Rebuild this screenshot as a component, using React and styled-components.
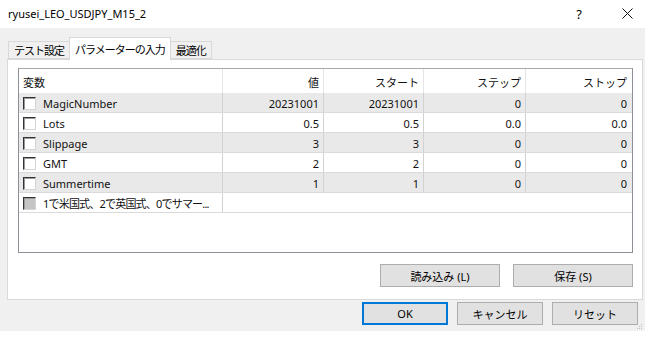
import React from 'react';
import styled, { createGlobalStyle } from 'styled-components';

const Global = createGlobalStyle`
  body {
    margin: 0;
    background: #fff;
    font-family: "Noto Sans", "Noto Sans CJK JP", sans-serif;
    font-size: 11px;
    color: #000;
  }
`

const Window = styled.div`
  position: relative;
  width: 645px;
  height: 331px;
  display: flex;
  flex-direction: column;
  background: #f0f0f0;
`

const TitleBar = styled.div`
  height: 28px;
  background: #fff;
  display: flex;
  align-items: center;
  padding-left: 8px;
  padding-bottom: 1px;
  box-sizing: border-box;
`

const Title = styled.div`
  flex: 1;
  font-size: 11px;
  color: #000;
`

const Help = styled.div`
  width: 24px;
  text-align: center;
  font-size: 13px;
  margin-right: 24px;
`

const Close = styled.div`
  width: 24px;
  display: flex;
  justify-content: center;
  margin-right: 6px;
`

const Body = styled.div`
  flex: 1;
  display: flex;
  flex-direction: column;
  padding: 9px 0 0 7px;
`

const TabStrip = styled.div`
  display: flex;
  align-items: flex-end;
  height: 22px;
  padding-left: 1px;
  position: relative;
  z-index: 1;
`

const Tab = styled.div`
  height: ${p => (p.$active ? '23px' : '18px')};
  box-sizing: border-box;
  padding: 0 ${p => (p.$active ? '5px' : '5px')};
  display: flex;
  align-items: center;
  background: ${p => (p.$active ? '#fff' : '#f0f0f0')};
  border: 1px solid #d9d9d9;
  border-bottom: ${p => (p.$active ? 'none' : '1px solid #d9d9d9')};
  margin-left: ${p => (p.$active ? '-1px' : '0')};
  margin-right: ${p => (p.$active ? '-1px' : '0')};
  margin-bottom: ${p => (p.$active ? '-1px' : '0')};
  font-size: 11px;
  letter-spacing: -1px;
  white-space: nowrap;
`

const Panel = styled.div`
  width: 636px;
  height: 241px;
  box-sizing: border-box;
  background: #fff;
  border: 1px solid #d9d9d9;
  padding: 8px 9px 0 10px;
  display: flex;
  flex-direction: column;
`

const List = styled.div`
  width: 615px;
  height: 185px;
  box-sizing: border-box;
  border: 1px solid #8c8f96;
  border-top-color: #a8a8a8;
  background: #fff;
`

const Row = styled.div`
  display: grid;
  grid-template-columns: 204px 101px 100px 102px 105px;
  height: ${p => (p.$head ? '24px' : '20px')};
  box-sizing: border-box;
  background: ${p => (p.$shade ? '#e9e9e9' : '#fff')};
  border-bottom: ${p => (p.$head ? 'none' : '1px solid #dadada')};
`

const Cell = styled.div`
  display: flex;
  align-items: center;
  justify-content: ${p => (p.$left ? 'flex-start' : 'flex-end')};
  padding: ${p => (p.$left ? '1px 0 0 4px' : '1px 4px 0 0')};
  border-right: ${p => (p.$line ? `1px solid ${p.$head ? '#e5e5e5' : '#d2d2d2'}` : 'none')};
  white-space: nowrap;
  overflow: hidden;
  color: #111;
  font-size: 11px;
  letter-spacing: ${p => (p.$tight ? '-0.8px' : 'normal')};
  gap: 7px;
`

const Check = styled.span`
  flex: none;
  width: 13px;
  height: 13px;
  box-sizing: border-box;
  border: 1px solid;
  border-color: #333 #d4d4d4 #d4d4d4 #333;
  box-shadow: inset 1px 1px 0 #9a9a9a;
  background: ${p => (p.$disabled ? '#c4c4c4' : '#fff')};
`

const ButtonRow = styled.div`
  display: flex;
  justify-content: flex-end;
  gap: 13px;
  margin-top: 11px;
`

const Button = styled.button`
  width: ${p => p.$w || 120}px;
  height: ${p => p.$h || 23}px;
  box-sizing: border-box;
  background: #e1e1e1;
  border: ${p => (p.$default ? '2px solid #0078d7' : '1px solid #adadad')};
  font-family: "Noto Sans", "Noto Sans CJK JP", sans-serif;
  font-size: 11px;
  color: #000;
  padding: 0;
`

const Footer = styled.div`
  display: flex;
  justify-content: flex-end;
  gap: 9px;
  padding: 2px 7px 0 0;
`

const Grip = styled.svg`
  position: absolute;
  right: 2px;
  bottom: 1px;
`

const rows = [
  ['MagicNumber', '20231001', '20231001', '0', '0'],
  ['Lots', '0.5', '0.5', '0.0', '0.0'],
  ['Slippage', '3', '3', '0', '0'],
  ['GMT', '2', '2', '0', '0'],
  ['Summertime', '1', '1', '0', '0'],
]

export default function App() {
  return (
    <Window>
      <Global />
      <TitleBar>
        <Title>ryusei_LEO_USDJPY_M15_2</Title>
        <Help>?</Help>
        <Close>
          <svg width="11" height="11" viewBox="0 0 11 11">
            <path d="M0.5 0.5 L10.5 10.5 M10.5 0.5 L0.5 10.5" stroke="#111" strokeWidth="1" />
          </svg>
        </Close>
      </TitleBar>
      <Body>
        <TabStrip>
          <Tab>テスト設定</Tab>
          <Tab $active>パラメーターの入力</Tab>
          <Tab>最適化</Tab>
        </TabStrip>
        <Panel>
          <List>
            <Row $head>
              <Cell $left $line $head>変数</Cell>
              <Cell $line $head>値</Cell>
              <Cell $line $head>スタート</Cell>
              <Cell $line $head>ステップ</Cell>
              <Cell $head>ストップ</Cell>
            </Row>
            {rows.map((r, i) => (
              <Row key={r[0]} $shade={i % 2 === 0}>
                <Cell $left $line><Check />{r[0]}</Cell>
                <Cell $line>{r[1]}</Cell>
                <Cell $line>{r[2]}</Cell>
                <Cell $line>{r[3]}</Cell>
                <Cell>{r[4]}</Cell>
              </Row>
            ))}
            <Row>
              <Cell $left $line $tight><Check $disabled />1で米国式、2で英国式、0でサマー...</Cell>
              <Cell />
              <Cell />
              <Cell />
              <Cell />
            </Row>
          </List>
          <ButtonRow>
            <Button>読み込み (L)</Button>
            <Button>保存 (S)</Button>
          </ButtonRow>
        </Panel>
        <Footer>
          <Button $default $w={86} $h={23}>OK</Button>
          <Button $w={86} $h={23}>キャンセル</Button>
          <Button $w={86} $h={23}>リセット</Button>
        </Footer>
      </Body>
      <Grip width="7" height="7" viewBox="0 0 7 7">
        <rect x="5" y="1" width="1" height="1" fill="#bbb" />
        <rect x="3" y="3" width="1" height="1" fill="#bbb" />
        <rect x="5" y="3" width="1" height="1" fill="#bbb" />
        <rect x="1" y="5" width="1" height="1" fill="#bbb" />
        <rect x="3" y="5" width="1" height="1" fill="#bbb" />
        <rect x="5" y="5" width="1" height="1" fill="#bbb" />
      </Grip>
    </Window>
  );
}
